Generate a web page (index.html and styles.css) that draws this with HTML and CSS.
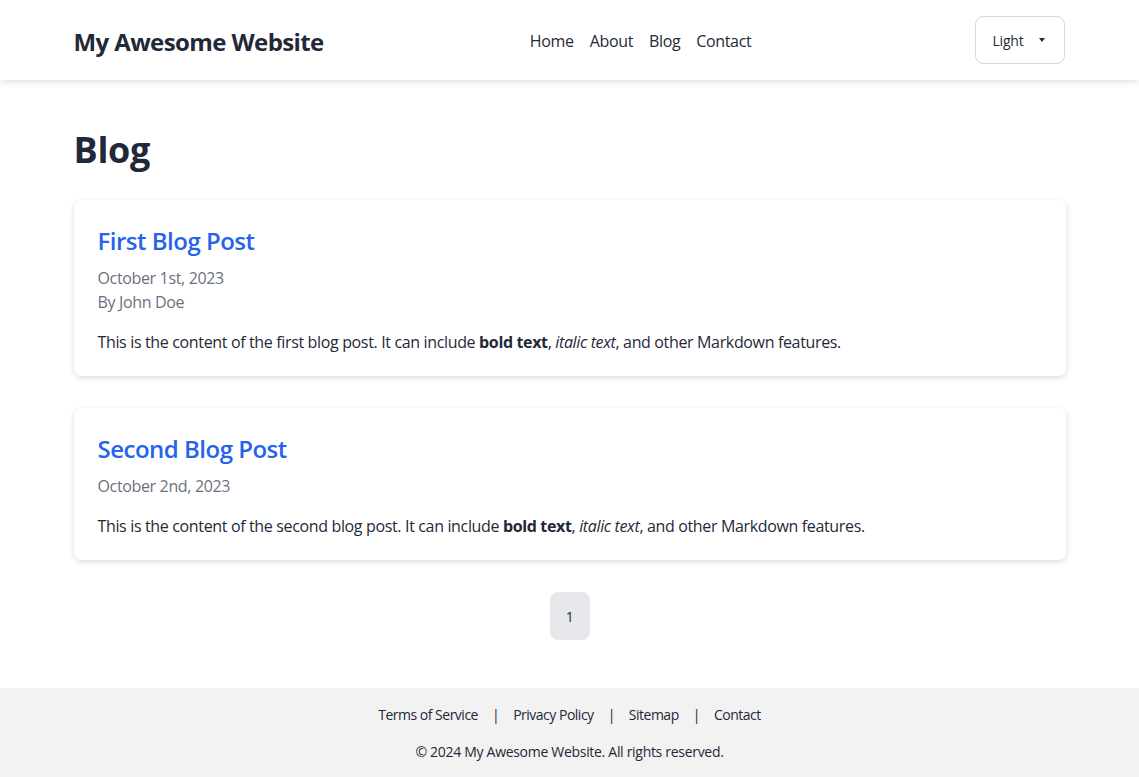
FILE: index.html
```html
<!DOCTYPE html>
<html lang="en">
<head>
<meta charset="utf-8">
<title>Blog - My Awesome Website</title>
<link rel="stylesheet" href="styles.css">
</head>
<body>
<header class="site-header">
  <div class="container header-inner">
    <a class="brand" href="#">My Awesome Website</a>
    <nav class="main-nav">
      <a href="#">Home</a>
      <a href="#">About</a>
      <a href="#">Blog</a>
      <a href="#">Contact</a>
    </nav>
    <button class="theme-select">Light <span class="caret"></span></button>
  </div>
</header>
<main class="container main">
  <h1 class="page-title">Blog</h1>
  <article class="post-card">
    <h2 class="post-title"><a href="#">First Blog Post</a></h2>
    <div class="post-meta">October 1st, 2023</div>
    <div class="post-meta">By John Doe</div>
    <p class="post-body">This is the content of the first blog post. It can include <strong>bold text</strong>, <em>italic text</em>, and other Markdown features.</p>
  </article>
  <article class="post-card">
    <h2 class="post-title"><a href="#">Second Blog Post</a></h2>
    <div class="post-meta">October 2nd, 2023</div>
    <p class="post-body">This is the content of the second blog post. It can include <strong>bold text</strong>, <em>italic text</em>, and other Markdown features.</p>
  </article>
  <div class="pagination">
    <span class="page-btn">1</span>
  </div>
</main>
<footer class="site-footer">
  <div class="footer-links">
    <a href="#">Terms of Service</a><span class="sep">|</span>
    <a href="#">Privacy Policy</a><span class="sep">|</span>
    <a href="#">Sitemap</a><span class="sep">|</span>
    <a href="#">Contact</a>
  </div>
  <p class="copyright">© 2024 My Awesome Website. All rights reserved.</p>
</footer>
</body>
</html>
```
FILE: styles.css
```css
* { box-sizing: border-box; }
body {
  margin: 0;
  font-family: "Open Sans", "Noto Sans", sans-serif;
  letter-spacing: -0.35px;
  color: #1f2937;
  background: #fff;
}
a { text-decoration: none; color: inherit; }
.container {
  width: 992px;
  margin: 0 auto;
}
.site-header {
  background: #fff;
  box-shadow: 0 2px 6px rgba(0,0,0,0.12);
  height: 80px;
  position: relative;
  z-index: 1;
}
.header-inner {
  height: 80px;
  display: flex;
  align-items: center;
  justify-content: space-between;
}
.brand {
  font-size: 24px;
  font-weight: 700;
  color: #1f2937;
  letter-spacing: -0.6px;
  padding-top: 2px;
}
.main-nav {
  display: flex;
  gap: 16px;
  font-size: 16px;
  margin-right: 18px;
  padding-top: 2px;
}
.theme-select {
  flex: none;
  width: 90px;
  height: 48px;
  border: 1px solid #d9d9d9;
  border-radius: 8px;
  background: #fff;
  font-family: inherit;
  letter-spacing: -0.2px;
  font-size: 14px;
  color: #1f2937;
  display: flex;
  align-items: center;
  padding: 0 19px 0 16px;
  justify-content: space-between;
}
.caret {
  width: 0; height: 0;
  border-left: 3px solid transparent;
  border-right: 3px solid transparent;
  border-top: 4px solid #1f2937;
}
.main {
  padding-top: 48px;
  padding-bottom: 48px;
}
.page-title {
  font-size: 36px;
  font-weight: 700;
  margin: 0 0 28px;
  line-height: 44px;
  letter-spacing: -0.3px;
}
.post-card {
  background: #fff;
  border-radius: 8px;
  box-shadow: 0 2px 6px rgba(0,0,0,0.14);
  padding: 25px 24px 22px;
  margin-bottom: 32px;
}
.post-title {
  font-size: 24px;
  font-weight: 600;
  margin: 0 0 9px;
  line-height: 32px;
  letter-spacing: -0.5px;
}
.post-title a { color: #2563eb; }
.post-meta {
  color: #6b7280;
  font-size: 16px;
  line-height: 24px;
}
.post-body {
  font-size: 16px;
  line-height: 24px;
  margin: 16px 0 0;
}
.pagination {
  display: flex;
  justify-content: center;
}
.page-btn {
  width: 40px;
  height: 48px;
  border-radius: 8px;
  background: #e5e7eb;
  display: flex;
  align-items: center;
  justify-content: center;
  font-size: 14px;
}
.site-footer {
  background: #f2f2f2;
  padding: 16px 0 16px;
  text-align: center;
  font-size: 14px;
  letter-spacing: -0.3px;
}
.footer-links {
  display: flex;
  justify-content: center;
  gap: 14px;
  line-height: 22px;
  letter-spacing: -0.5px;
}
.copyright {
  margin: 15px 0 0;
  line-height: 22px;
}
```
